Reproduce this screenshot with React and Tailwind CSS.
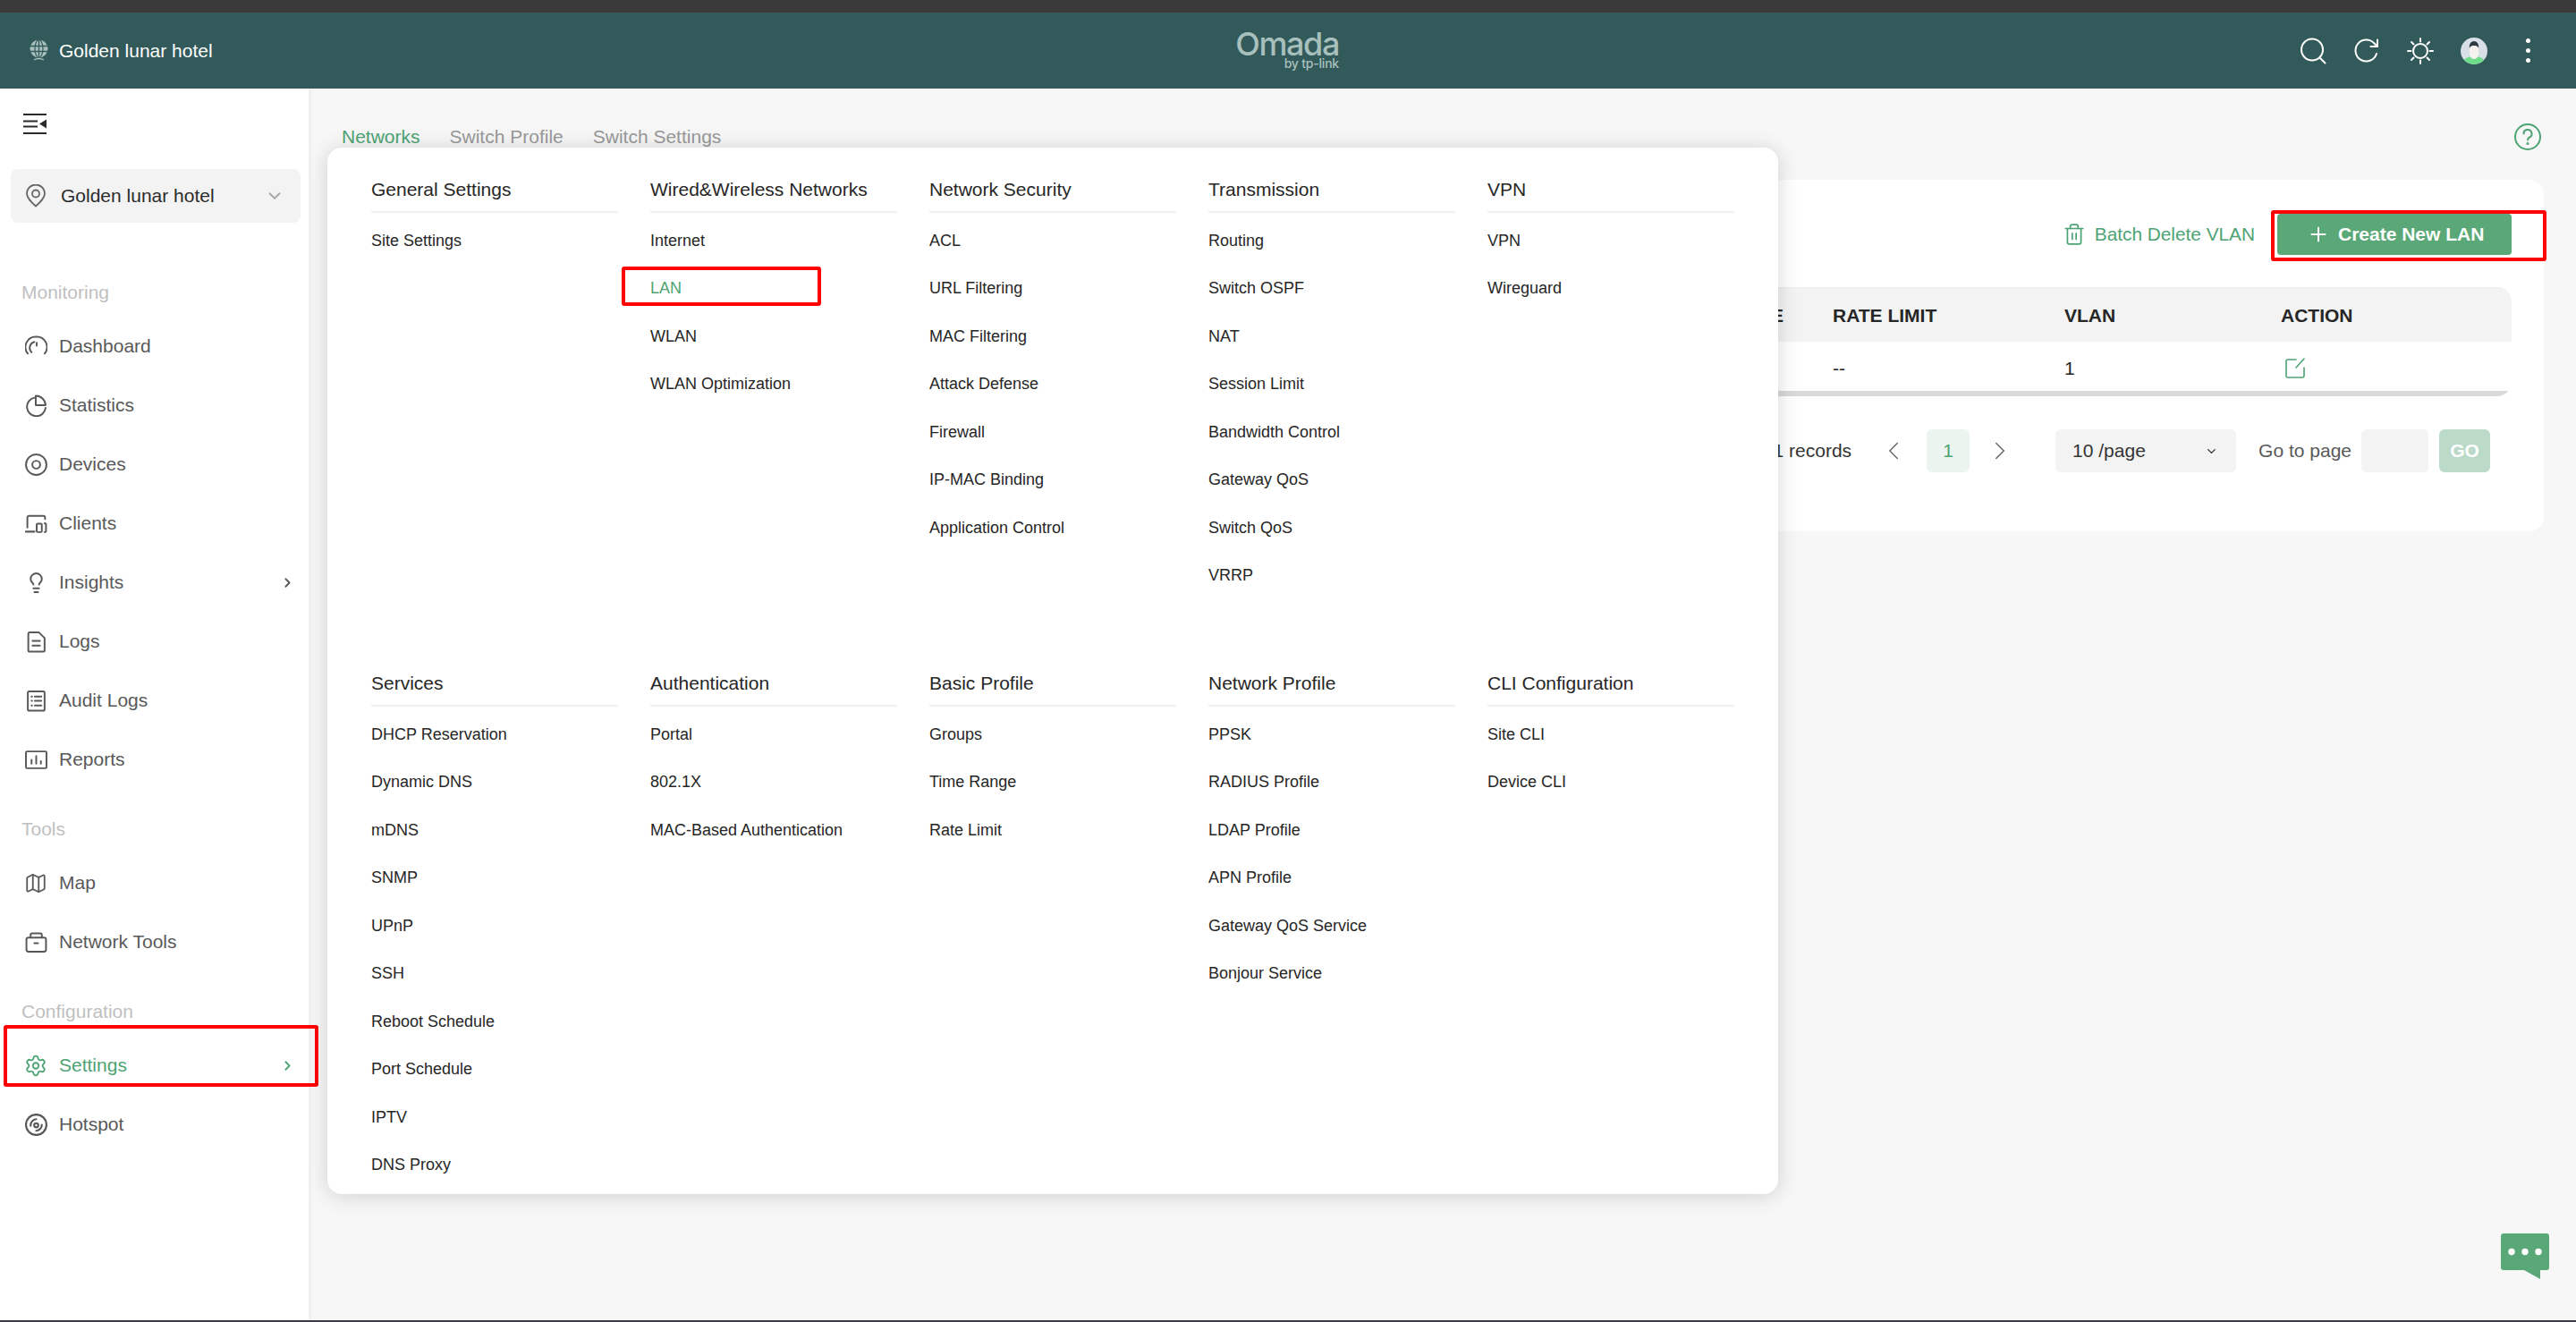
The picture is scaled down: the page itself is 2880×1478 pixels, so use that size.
import {
  ChevronDown,
  ChevronLeft,
  ChevronRight,
  Lightbulb,
  Map as MapIcon,
  Plus,
  Settings,
  Trash2,
} from 'lucide-react'

const Stroke = ({ children, className = '', size = 25, sw = 1.9 }) => (
  <svg
    width={size}
    height={size}
    viewBox="0 0 24 24"
    fill="none"
    stroke="currentColor"
    strokeWidth={sw}
    strokeLinecap="round"
    strokeLinejoin="round"
    className={className}
  >
    {children}
  </svg>
)

const GaugeIcon = () => (
  <Stroke>
    <path d="M3 19.500A11 11 0 0 1 12 1.500a11 11 0 0 1 9 18" />
    <path d="M7 18a6.500 6.500 0 0 1 3-11" />
    <path d="M12.500 8v3" />
  </Stroke>
)
const PieIcon = () => (
  <Stroke>
    <path d="M10 3.500a10 10 0 1 0 12 11" />
    <path d="M11.500 1.500a10.500 10.500 0 0 1 10.500 10h-10.500z" />
  </Stroke>
)
const DeviceIcon = () => (
  <Stroke>
    <circle cx="12" cy="12" r="11" />
    <circle cx="12" cy="12" r="4.200" />
  </Stroke>
)
const ClientsIcon = () => (
  <Stroke>
    <path d="M2.500 16V5.500A2 2 0 0 1 4.500 3.500h15a2 2 0 0 1 2 2V7" />
    <path d="M1 20.500h9" strokeWidth="2.200" />
    <rect x="12.500" y="12" width="5.500" height="9" rx="1" />
    <path d="M21 11.500c1 0 1.500.5 1.500 1.500v6.500c0 1-.5 1.500-1.500 1.500" />
  </Stroke>
)
const LogsIcon = () => (
  <Stroke>
    <path d="M3.500 3.500A1.500 1.500 0 0 1 5 2h10l6 6v13.500a1 1 0 0 1-1 1H4.500a1 1 0 0 1-1-1z" />
    <path d="M8 11h8M8 16h8" />
  </Stroke>
)
const AuditIcon = () => (
  <Stroke>
    <rect x="3" y="2" width="18" height="20.500" rx="1.500" />
    <path d="M7 7.500h.5M10.500 7.500h7M7 12h.5M10.500 12h7M7 17h.5M10.500 17h7" />
  </Stroke>
)
const ReportsIcon = () => (
  <Stroke>
    <rect x="1" y="3" width="22" height="18" rx="1" />
    <path d="M7 16v-4M12 16V8M17 16v-2.500" />
  </Stroke>
)
const ToolsIcon = () => (
  <Stroke>
    <rect x="1.500" y="7" width="21" height="15" rx="2" />
    <path d="M6 7V4a1.500 1.500 0 0 1 1.500-1.500h9A1.500 1.500 0 0 1 18 4v3" />
    <path d="M10 13h4" />
  </Stroke>
)
const HotspotIcon = () => (
  <Stroke sw={2.100}>
    <circle cx="12" cy="12" r="11" />
    <circle cx="12" cy="12.500" r="2.200" />
    <path d="M6 13a6.500 6.500 0 0 1 6-7M18 12a6.500 6.500 0 0 1-6 6.500" />
  </Stroke>
)

const sidebar = [
  {
    title: 'Monitoring',
    items: [
      { label: 'Dashboard', icon: GaugeIcon },
      { label: 'Statistics', icon: PieIcon },
      { label: 'Devices', icon: DeviceIcon },
      { label: 'Clients', icon: ClientsIcon },
      { label: 'Insights', icon: () => <Lightbulb size={25} strokeWidth={1.9} />, arrow: true },
      { label: 'Logs', icon: LogsIcon },
      { label: 'Audit Logs', icon: AuditIcon },
      { label: 'Reports', icon: ReportsIcon },
    ],
  },
  {
    title: 'Tools',
    items: [
      { label: 'Map', icon: () => <MapIcon size={27} strokeWidth={1.7} /> },
      { label: 'Network Tools', icon: ToolsIcon },
    ],
  },
  {
    title: 'Configuration',
    items: [
      { label: 'Settings', icon: () => <Settings size={27} strokeWidth={1.7} />, arrow: true, active: true },
      { label: 'Hotspot', icon: HotspotIcon },
    ],
  },
]

const menuRows = [
  [
    { title: 'General Settings', items: ['Site Settings'] },
    { title: 'Wired&Wireless Networks', items: ['Internet', 'LAN', 'WLAN', 'WLAN Optimization'] },
    {
      title: 'Network Security',
      items: ['ACL', 'URL Filtering', 'MAC Filtering', 'Attack Defense', 'Firewall', 'IP-MAC Binding', 'Application Control'],
    },
    {
      title: 'Transmission',
      items: ['Routing', 'Switch OSPF', 'NAT', 'Session Limit', 'Bandwidth Control', 'Gateway QoS', 'Switch QoS', 'VRRP'],
    },
    { title: 'VPN', items: ['VPN', 'Wireguard'] },
  ],
  [
    {
      title: 'Services',
      items: ['DHCP Reservation', 'Dynamic DNS', 'mDNS', 'SNMP', 'UPnP', 'SSH', 'Reboot Schedule', 'Port Schedule', 'IPTV', 'DNS Proxy'],
    },
    { title: 'Authentication', items: ['Portal', '802.1X', 'MAC-Based Authentication'] },
    { title: 'Basic Profile', items: ['Groups', 'Time Range', 'Rate Limit'] },
    {
      title: 'Network Profile',
      items: ['PPSK', 'RADIUS Profile', 'LDAP Profile', 'APN Profile', 'Gateway QoS Service', 'Bonjour Service'],
    },
    { title: 'CLI Configuration', items: ['Site CLI', 'Device CLI'] },
  ],
]

function RedFrame({ className }) {
  return <div className={`absolute border-[4px] border-[#ff0000] rounded-[3px] pointer-events-none ${className}`} />
}

function Header() {
  return (
    <header className="h-[85px] shrink-0 bg-[#335a5a] flex items-center justify-between relative">
      <div className="flex items-center pl-[33px] gap-[12px] text-white text-[21px]">
        <svg width="21" height="25" viewBox="0 0 21 25" className="text-[#a9c0bd]">
          <circle cx="10.500" cy="10.500" r="10" fill="currentColor" />
          <path d="M10.500 0.500v20M0.500 7.500h20M0.500 13.500h20" stroke="#335a5a" strokeWidth="1.300" fill="none" />
          <ellipse cx="10.500" cy="10.500" rx="4.500" ry="10" stroke="#335a5a" strokeWidth="1.200" fill="none" />
          <path d="M5 23c3-2 8-2 11 0" stroke="currentColor" strokeWidth="1.300" fill="none" />
        </svg>
        <span>Golden lunar hotel</span>
      </div>

      {/* logo */}
      <div className="absolute left-[1383px] top-[20px] w-[114px] text-[#a8c0bd] flex flex-col items-end font-['Inter',sans-serif]">
        <span className="text-[36px] leading-[30px] font-medium tracking-[-1.400px]">Omada</span>
        <span className="text-[14px] leading-[14px] font-medium tracking-[-0.200px]">by tp-link</span>
      </div>

      <div className="flex items-center text-white pr-[39px] gap-[30px]">
        <svg width="30" height="30" viewBox="0 0 30 30" fill="none" stroke="currentColor" strokeWidth="2" strokeLinecap="round">
          <circle cx="14" cy="13.500" r="12" />
          <path d="M23 23l5.500 5.500" />
        </svg>
        <svg width="30" height="30" viewBox="0 0 30 30" fill="none" stroke="currentColor" strokeWidth="2" strokeLinecap="round" strokeLinejoin="round">
          <path d="M26 18a12 12 0 1 1-3-12l4 4" />
          <path d="M27 2.500v7.500h-7.500" />
        </svg>
        <svg width="30" height="30" viewBox="0 0 30 30" fill="none" stroke="currentColor" strokeWidth="2" strokeLinecap="round">
          <circle cx="15" cy="15" r="8" />
          <path d="M15 1v3.500M15 25.500V29M1 15h3.500M25.500 15H29M5 5l2.500 2.500M22.500 22.500L25 25M5 25l2.500-2.500M22.500 7.500L25 5" />
        </svg>
        <svg width="30" height="30" viewBox="0 0 30 30">
          <clipPath id="avatar"><circle cx="15" cy="15" r="15" /></clipPath>
          <g clipPath="url(#avatar)">
            <rect width="30" height="30" fill="#d8dfe6" />
            <path d="M2 30c0-6 6-9 13-9s13 3 13 9z" fill="#6fdc8c" />
            <path d="M10 8h10v10c0 3-2 6-5 6s-5-3-5-6z" fill="#f5f1ee" />
            <path d="M10 12c-1-5 2-8 5-8s6 3 5 8c-1-3-3-3-5-3s-4 0-5 3z" fill="#2f3a44" />
          </g>
        </svg>
        <div className="w-[30px] flex flex-col items-center gap-[6px]">
          <span className="w-[5px] h-[5px] rounded-full bg-white" />
          <span className="w-[5px] h-[5px] rounded-full bg-white" />
          <span className="w-[5px] h-[5px] rounded-full bg-white" />
        </div>
      </div>
    </header>
  )
}

function Sidebar() {
  return (
    <aside className="w-[348px] shrink-0 bg-white border-r-[3px] border-[#f0f0f0]">
      <div className="pt-[28px] pl-[26px]">
        <svg width="26" height="23" viewBox="0 0 26 23" className="text-[#2b2b2b]">
          <path d="M0 1h26M0 8.500h16M0 14.500h16M0 22h26" stroke="currentColor" strokeWidth="2" />
          <path d="M26 6.500v10l-8-5z" fill="currentColor" />
        </svg>
      </div>
      <div className="mt-[39px] ml-[12px] mr-[9px] h-[60px] rounded-[8px] bg-[#f3f3f3] flex items-center pl-[17px] pr-[18px] text-[#2b2b2b]">
        <svg width="22" height="26" viewBox="0 0 22 26" fill="none" stroke="#666" strokeWidth="1.800" className="shrink-0">
          <path d="M11 24.500C6 20 1 15.500 1 10.500a10 10 0 0 1 20 0c0 5-5 9.500-10 14z" />
          <circle cx="11" cy="10.500" r="4" />
        </svg>
        <span className="ml-[17px] text-[21px] flex-1">Golden lunar hotel</span>
        <ChevronDown size={22} strokeWidth={2} className="text-[#a6a6a6]" />
      </div>

      {sidebar.map((section, i) => (
        <div key={section.title} className={i === 0 ? 'mt-[66px]' : 'mt-[33px]'}>
          <div className="pl-[24px] h-[24px] mb-[15px] leading-[24px] text-[21px] text-[#bfbfbf]">{section.title}</div>
          {section.items.map((item) => {
            const Icon = item.icon
            return (
              <div
                key={item.label}
                className={`relative h-[66px] flex items-center pl-[27px] pr-[15px] text-[21px] ${item.active ? 'text-[#4ea374]' : 'text-[#595959]'}`}
              >
                <span className="w-[26px] flex justify-center">
                  <Icon />
                </span>
                <span className="ml-[13px] flex-1">{item.label}</span>
                {item.arrow && <ChevronRight size={17} strokeWidth={2.6} />}
                {item.active && <RedFrame className="left-[4px] top-[-12px] w-[352px] h-[69px]" />}
              </div>
            )
          })}
        </div>
      ))}
    </aside>
  )
}

function SettingsMenu() {
  return (
    <div className="absolute left-[18px] top-[66px] w-[1622px] h-[1170px] z-10 bg-white rounded-[16px] shadow-[0_2px_24px_rgba(0,0,0,0.16)] pt-[35px] pl-[49px] text-[#262626]">
      {menuRows.map((row, r) => (
        <div key={r} className={`grid grid-cols-[repeat(5,276px)] gap-x-[36px] ${r === 0 ? 'h-[552px]' : ''}`}>
          {row.map((col) => (
            <div key={col.title}>
              <div className="h-[38px] border-b-2 border-[#f0f0f0] text-[21px] leading-[24px]">{col.title}</div>
              <ul className="mt-[4.500px]">
                {col.items.map((item) => (
                  <li
                    key={item}
                    className={`relative h-[53.5px] flex items-center text-[18px] ${item === 'LAN' ? 'text-[#4ea374]' : ''}`}
                  >
                    {item}
                    {item === 'LAN' && <RedFrame className="left-[-32px] top-[2px] w-[223px] h-[44px]" />}
                  </li>
                ))}
              </ul>
            </div>
          ))}
        </div>
      ))}
    </div>
  )
}

function Pagination() {
  return (
    <div className="mt-[37px] pr-[24px] flex items-center justify-end h-[48px] text-[21px] text-[#333]">
      <span>Showing 1-1 of 1 records</span>
      <ChevronLeft size={34} strokeWidth={1} className="ml-[30px] mr-[20px] text-[#666]" />
      <span className="w-[48px] h-[48px] rounded-[6px] bg-[#ecf4ef] text-[#4ea374] flex items-center justify-center">1</span>
      <ChevronRight size={34} strokeWidth={1} className="ml-[17px] mr-[45px] text-[#666]" />
      <div className="w-[202px] h-[48px] rounded-[6px] bg-[#f3f3f3] flex items-center justify-between pl-[19px] pr-[20px]">
        <span>10 /page</span>
        <ChevronDown size={15} strokeWidth={2.2} />
      </div>
      <span className="ml-[25px] text-[#595959]">Go to page</span>
      <div className="ml-[11px] w-[75px] h-[48px] rounded-[6px] bg-[#f3f3f3]" />
      <div className="ml-[12px] w-[57px] h-[48px] rounded-[6px] bg-[#bbdac8] text-white font-bold flex items-center justify-center">GO</div>
    </div>
  )
}

function LanCard() {
  return (
    <section className="mt-[33px] h-[393px] bg-white rounded-[16px] px-[36px] pt-[38px]">
      <div className="flex items-center justify-end h-[46px]">
        <div className="flex items-center text-[#4ea374] text-[20.8px] mr-[25px]">
          <Trash2 size={26} strokeWidth={1.6} />
          <span className="ml-[10px]">Batch Delete VLAN</span>
        </div>
        <div className="relative w-[262px] h-[46px] rounded-[4px] bg-[#5aa878] text-white font-bold text-[21px] flex items-center pl-[33px]">
          <Plus size={26} strokeWidth={1.8} />
          <span className="ml-[9px]">Create New LAN</span>
          <RedFrame className="left-[-7px] top-[-4px] w-[308px] h-[57px]" />
        </div>
      </div>

      <div className="mt-[36px] rounded-[16px] overflow-hidden text-[21px] text-[#262626]">
        <div className="grid grid-cols-[1fr_259px_242px_258px] h-[61px] pt-[2px] items-center bg-[#f3f3f3] border-t border-[#ececec] font-bold">
          <span className="text-right pr-[55px]">PROFILE</span>
          <span>RATE LIMIT</span>
          <span>VLAN</span>
          <span>ACTION</span>
        </div>
        <div className="grid grid-cols-[1fr_259px_242px_258px] h-[55px] pt-[5px] items-center">
          <span />
          <span>--</span>
          <span>1</span>
          <svg width="26" height="26" viewBox="0 0 26 26" fill="none" stroke="#4ea374" strokeWidth="1.600" strokeLinecap="round" className="ml-[3px]">
            <path d="M14 3H5a2 2 0 0 0-2 2v16a2 2 0 0 0 2 2h16a2 2 0 0 0 2-2v-9" />
            <path d="M23 2l-9 10" />
          </svg>
        </div>
        <div className="h-[6px] bg-[#d9d9d9]" />
      </div>

      <Pagination />
    </section>
  )
}

export default function App() {
  return (
    <div className="relative w-[2880px] h-[1478px] overflow-hidden flex flex-col bg-[#f7f7f7] font-['Liberation_Sans',Arial,sans-serif]">
      <div className="h-[14px] shrink-0 bg-[#3a3a3a]" />
      <Header />

      <div className="flex-1 flex min-h-0">
        <Sidebar />
        <main className="relative flex-1 pl-[20px] pr-[36px]">
          <div className="mt-[39px] h-[30px] pl-[14px] flex items-center justify-between text-[21px] text-[#999]">
            <div className="flex gap-[33px]">
              <span className="text-[#4ea374]">Networks</span>
              <span>Switch Profile</span>
              <span>Switch Settings</span>
            </div>
            <svg width="30" height="30" viewBox="0 0 30 30" fill="none" stroke="#4ea374" strokeWidth="2" strokeLinecap="round" className="mr-[3px]">
              <circle cx="15" cy="15" r="14" />
              <path d="M10.500 11.500a4.500 4.500 0 1 1 6.500 4c-1.500.8-2 1.500-2 3" />
              <circle cx="15" cy="22.500" r="0.600" fill="#4ea374" />
            </svg>
          </div>
          <LanCard />
          <SettingsMenu />

          {/* chat bubble */}
          <svg width="54" height="52" viewBox="0 0 54 52" className="absolute left-[2448px] top-[1280px]">
            <path d="M3 0h48a3 3 0 0 1 3 3v35a3 3 0 0 1-3 3H44v10l-18-10H3a3 3 0 0 1-3-3V3a3 3 0 0 1 3-3z" fill="#5aa878" />
            <circle cx="12" cy="20.500" r="3.700" fill="white" />
            <circle cx="27" cy="20.500" r="3.700" fill="white" />
            <circle cx="42" cy="20.500" r="3.700" fill="white" />
          </svg>
        </main>
      </div>
      <div className="h-[2px] shrink-0 bg-[#3a3a48]" />
    </div>
  )
}
